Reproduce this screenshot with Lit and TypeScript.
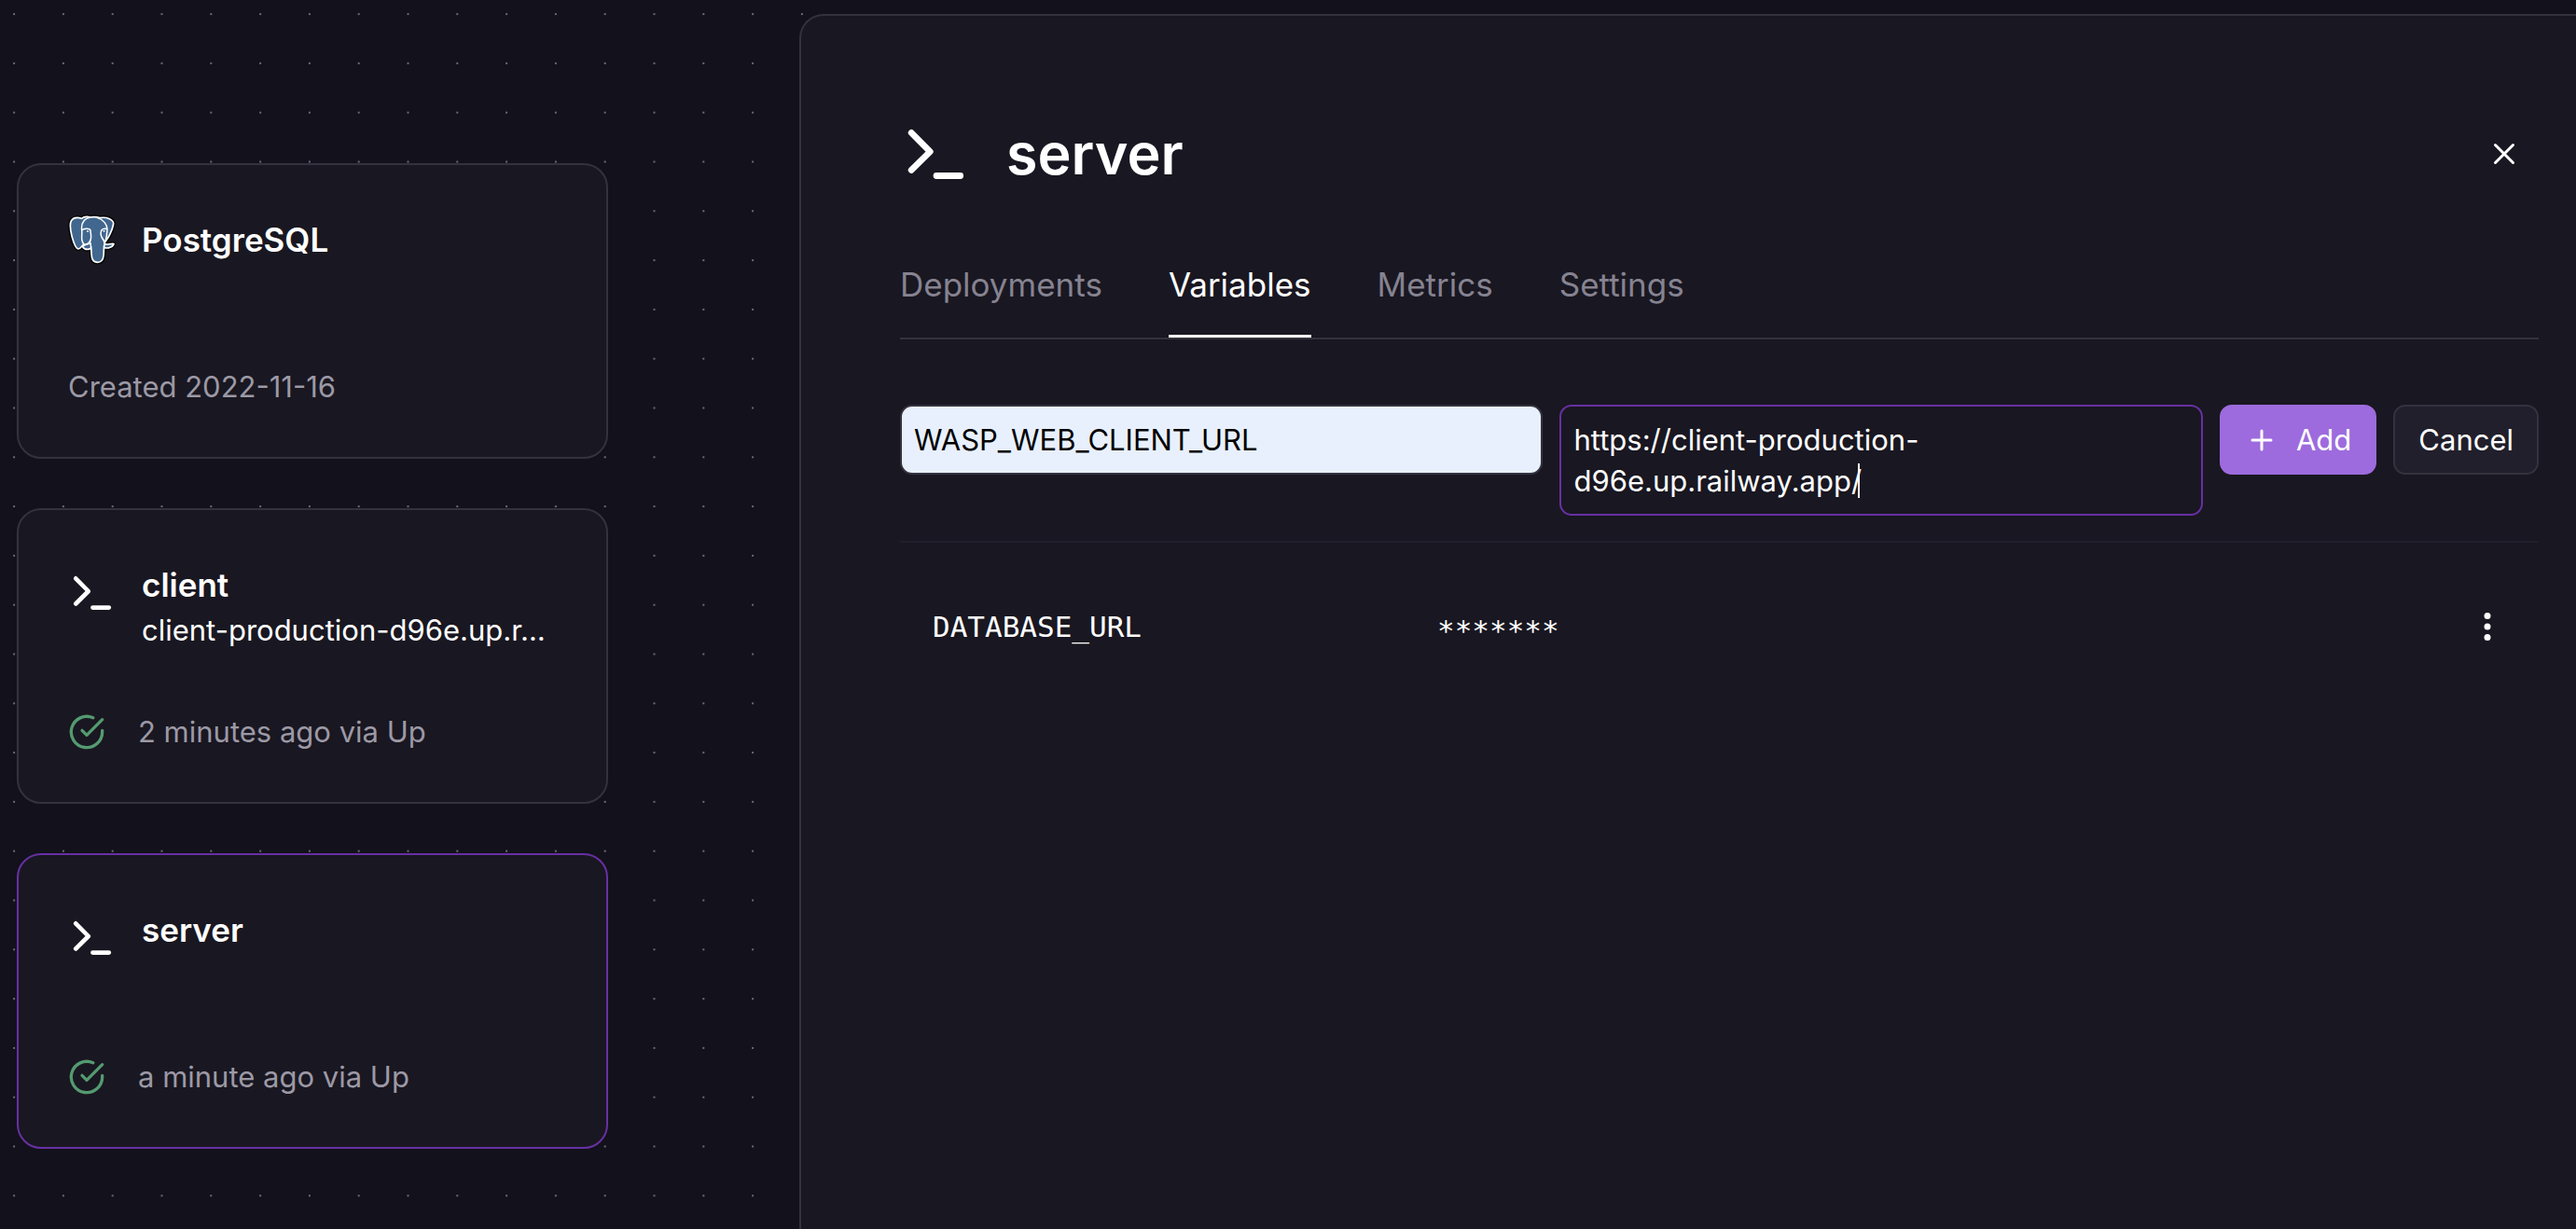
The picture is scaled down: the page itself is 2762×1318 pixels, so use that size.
import { LitElement, html, css, svg } from "lit";
import { customElement, property } from "lit/decorators.js";
import { classMap } from "lit/directives/class-map.js";

const terminalIcon = html`<svg class="terminal" viewBox="0 0 48 40" fill="none" stroke="#fff" stroke-width="4.600" stroke-linecap="round" stroke-linejoin="round" aria-hidden="true">
  <path d="M8.200 4.300 L21.800 18 L8.200 31.500" />
  <path d="M26.400 35.600 H43.800" />
</svg>`;

const elephantShapes = svg`
  <path d="M24 3 C19 1.800 16 3 14.500 4.300 C11 3.200 6 3 3.500 6.500 C1.500 10 2.500 17 4 23 C5.500 29 8 36.500 11 37 C13 37 14.500 34 16.500 32.500 L36 31 L39 30 C43 26 47.500 17 48.700 10 C48.500 5 41 2.300 34 3.600 C31 2.600 27 2.300 24 3 Z" />
  <path d="M15.500 34.500 C18 31.500 22 32 24 30.500 L26 34 C24 38 18.500 39 15.500 34.500 Z" />
  <path d="M38.500 31.500 C42 33 45 31 49 31.500 C48.500 34.500 43 37 38.500 35.500 Z" />
  <path d="M23.500 29 C25.500 35 24.500 41 25.500 46 C26.500 50.500 28.500 51.300 31.500 51.300 C35.500 51.300 37.500 49 38 44.500 C38.700 39 38 35 39 30 L36 24 L26 24 Z" />`;

const elephantIcon = html`<svg class="elephant" viewBox="0 0 52 54" aria-hidden="true">
  <g fill="#000" stroke="#000" stroke-width="4.500" stroke-linejoin="round">${elephantShapes}</g>
  <g fill="#41678f" stroke="#fff" stroke-width="1.700" stroke-linejoin="round">${elephantShapes}</g>
  <path d="M23.500 14 H36.500 L38.200 33 L25.500 34 L24.500 29 Z" fill="#41678f" />
  <g fill="none" stroke="#fff" stroke-width="1.500" stroke-linecap="round">
    <path d="M24 3 C17.500 4 14.500 9 14.500 15 C15.500 20 14 25 15 28 C15.500 30 16.500 31.500 17.500 32.500" />
    <path d="M31.500 3.600 C38 5.500 42 11 42 16 C41.500 20 41.500 26 39.500 30" />
    <path d="M15 16.500 C18 15 23 14.500 24 17 C24 20 25.500 24 24 27.500 C23 30 21 32 18 32.500" />
    <path d="M41.500 15.500 C38.500 15 35.500 15.500 35.500 18 C34 22 36 25 38 27.500 C39 29 39.300 30 39.500 31" />
    <path d="M20.500 18 H21.500 M38 17.800 H39" />
  </g>
</svg>`;

const checkIcon = html`<svg class="check" viewBox="0 0 24 24" fill="none" stroke="#549a70" stroke-width="2" stroke-linecap="round" stroke-linejoin="round" aria-hidden="true">
  <path d="M22 11.080 V12 a10 10 0 1 1 -5.930 -9.140" />
  <path d="M22 4 L12 14.010 L9 11.010" />
</svg>`;

@customElement("service-card")
export class ServiceCard extends LitElement {
  @property() name = "";
  @property() domain = "";
  @property() status = "";
  @property() kind = "service";
  @property({ type: Boolean }) selected = false;

  static styles = css`
    :host {
      display: block;
    }
    .card {
      box-sizing: border-box;
      display: flex;
      flex-direction: column;
      justify-content: space-between;
      width: 100%;
      min-height: 317px;
      padding: 53px;
      border: 2px solid #33323e;
      border-radius: 26px;
      background: #191721;
      color: #fff;
    }
    .selected {
      border-color: #6730a3;
    }
    .head {
      display: flex;
      align-items: flex-start;
      gap: 26px;
    }
    .icon {
      flex: none;
      width: 53px;
      height: 54px;
    }
    .info {
      min-width: 0;
      flex: 1;
    }
    h2 {
      margin: 0;
      font-size: 35px;
      line-height: 54px;
      font-weight: 600;
    }
    .domain,
    .foot {
      margin: 0;
      font-size: 31px;
      line-height: 44px;
    }
    .domain {
      white-space: nowrap;
    }
    .foot {
      display: flex;
      align-items: center;
      gap: 35px;
      color: #9c99a6;
    }
    svg {
      display: block;
    }
    .elephant {
      width: 52px;
      height: 54px;
    }
    .terminal {
      width: 48px;
      height: 40px;
      margin-top: 16px;
    }
    .check {
      width: 40px;
      height: 40px;
    }
  `;

  render() {
    const isDatabase = this.kind === "database";
    return html`<article class=${classMap({ card: true, selected: this.selected })}>
      <div class="head">
        <div class="icon">${isDatabase ? elephantIcon : terminalIcon}</div>
        <div class="info">
          <h2>${this.name}</h2>
          ${this.domain ? html`<p class="domain">${this.domain}</p>` : null}
        </div>
      </div>
      <p class="foot">${isDatabase ? null : checkIcon}<span>${this.status}</span></p>
    </article>`;
  }
}

@customElement("app-root")
export class AppRoot extends LitElement {
  static styles = css`
    :host {
      display: block;
      font-family: Inter, "Liberation Sans", sans-serif;
      color: #fff;
    }
    * {
      box-sizing: border-box;
    }
    .page {
      display: grid;
      grid-template-columns: 857px 1fr;
      min-height: 100vh;
      background: #13111c;
    }
    .canvas {
      position: relative;
      display: flex;
      flex-direction: column;
      gap: 53px;
      padding: 175px 205px 0 18px;
    }
    .canvas service-card {
      position: relative;
    }
    .grid {
      position: absolute;
      top: 0;
      left: 0;
      width: calc(100% + 5px);
      height: 100%;
    }
    .panel {
      position: relative;
      margin-top: 15px;
      padding: 104px 40px 0 106px;
      border: 2px solid #33323e;
      border-width: 2px 0 0 2px;
      border-top-left-radius: 26px;
      background: #191721;
    }
    .title {
      display: flex;
      align-items: center;
      gap: 43px;
      height: 88px;
    }
    .title .terminal {
      width: 71px;
      height: 59px;
    }
    h1 {
      flex: 1;
      margin: 0;
      font-size: 61px;
      line-height: 88px;
      font-weight: 600;
    }
    button {
      font: inherit;
      color: inherit;
      cursor: pointer;
    }
    svg {
      display: block;
    }
    .icon-button {
      display: grid;
      place-items: center;
      width: 74px;
      height: 74px;
      padding: 0;
      border: 0;
      background: none;
    }
    .icon-button svg {
      width: 36px;
      height: 36px;
    }
    .tabs {
      display: flex;
      gap: 71px;
      margin-top: 66px;
      border-bottom: 2px solid #33323e;
    }
    .tabs a {
      padding-bottom: 24px;
      border-bottom: 3px solid transparent;
      font-size: 35px;
      line-height: 60px;
      color: #868391;
      text-decoration: none;
    }
    .tabs .active {
      border-color: #fff;
      color: #fff;
    }
    .form {
      display: flex;
      align-items: flex-start;
      gap: 18px;
      padding: 70px 0 27px;
      border-bottom: 2px solid #211f2c;
      font-size: 31px;
      line-height: 44px;
    }
    .field {
      position: relative;
      flex: 1;
      min-width: 0;
    }
    .field input,
    .field textarea {
      display: block;
      width: 100%;
      margin: 0;
      padding: 14px 13px;
      border: 2px solid #33323e;
      border-radius: 13px;
      font: inherit;
      outline: none;
      resize: none;
    }
    .field input {
      height: 75px;
      background: #e8f0fe;
      color: #000;
    }
    .field textarea {
      height: 119px;
      overflow: hidden;
      border-color: #6730a3;
      background: #191721;
      color: #fff;
      caret-color: transparent;
    }
    .caret {
      position: absolute;
      left: 320px;
      top: 63px;
      width: 2px;
      height: 37px;
      background: #fff;
    }
    .btn {
      display: flex;
      align-items: center;
      height: 75px;
      padding: 0 25px;
      border: 2px solid #33323e;
      border-radius: 13px;
      background: #211f2b;
    }
    .primary {
      gap: 19px;
      border-color: #9d6bdd;
      background: #9d6bdd;
    }
    .primary svg {
      width: 36px;
      height: 36px;
    }
    .vars {
      width: 100%;
      margin-top: 53px;
      border-collapse: collapse;
      font-family: "DejaVu Sans Mono", monospace;
      font-size: 31px;
      line-height: 44px;
    }
    .vars th,
    .vars td {
      padding: 0;
      font-weight: 400;
      text-align: left;
    }
    .vars .name {
      width: 576px;
      padding-left: 35px;
    }
    .vars .value {
      padding-top: 8px;
    }
    .vars .actions {
      width: 92px;
    }
  `;

  render() {
    return html`<div class="page">
      <main class="canvas">
        <svg class="grid" aria-hidden="true">
          <defs>
            <pattern id="dots" x="14.100" y="14.100" width="52.800" height="52.800" patternUnits="userSpaceOnUse">
              <rect width="2" height="2" fill="#6b6876" />
            </pattern>
          </defs>
          <rect width="100%" height="100%" fill="url(#dots)" />
        </svg>
        <service-card kind="database" name="PostgreSQL" status="Created 2022-11-16"></service-card>
        <service-card name="client" domain="client-production-d96e.up.r…" status="2 minutes ago via Up"></service-card>
        <service-card name="server" status="a minute ago via Up" selected></service-card>
      </main>
      <aside class="panel">
        <header class="title">
          ${terminalIcon}
          <h1>server</h1>
          <button class="icon-button" type="button" aria-label="Close">
            <svg viewBox="0 0 36 36" fill="none" stroke="#fff" stroke-width="3" stroke-linecap="round">
              <path d="M8.500 8.500 L27.500 27.500 M27.500 8.500 L8.500 27.500" />
            </svg>
          </button>
        </header>
        <nav class="tabs">
          <a href="#deployments">Deployments</a>
          <a class="active" href="#variables" aria-current="page">Variables</a>
          <a href="#metrics">Metrics</a>
          <a href="#settings">Settings</a>
        </nav>
        <form class="form" @submit=${(e: Event) => e.preventDefault()}>
          <div class="field">
            <input type="text" aria-label="Variable name" .value=${"WASP_WEB_CLIENT_URL"} />
          </div>
          <div class="field">
            <textarea aria-label="Variable value" spellcheck="false" .value=${"https://client-production-d96e.up.railway.app/"}></textarea>
            <span class="caret" aria-hidden="true"></span>
          </div>
          <button class="btn primary" type="submit">
            <svg viewBox="0 0 36 36" fill="none" stroke="#fff" stroke-width="3" stroke-linecap="round" aria-hidden="true">
              <path d="M18 8 V28 M8 18 H28" />
            </svg>
            <span>Add</span>
          </button>
          <button class="btn" type="button">Cancel</button>
        </form>
        <table class="vars">
          <tbody>
            <tr>
              <th class="name" scope="row">DATABASE_URL</th>
              <td class="value">*******</td>
              <td class="actions">
                <button class="icon-button" type="button" aria-label="Variable actions">
                  <svg viewBox="0 0 36 36" fill="#fff" aria-hidden="true">
                    <circle cx="18" cy="6.500" r="3.500" />
                    <circle cx="18" cy="18" r="3.500" />
                    <circle cx="18" cy="29.500" r="3.500" />
                  </svg>
                </button>
              </td>
            </tr>
          </tbody>
        </table>
      </aside>
    </div>`;
  }
}
